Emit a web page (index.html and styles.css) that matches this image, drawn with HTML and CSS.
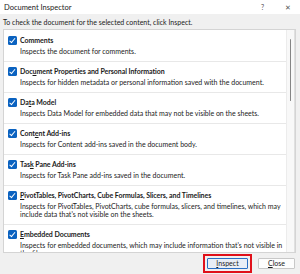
FILE: index.html
```html
<!DOCTYPE html>
<html lang="en">

<head>
    <meta charset="UTF-8">
    <title>Document Inspector</title>
    <link rel="stylesheet" href="styles.css">
</head>

<body>
    <div id="dialog">
        <!-- Title bar -->
        <div id="title-bar">
            <span class="title">Document Inspector</span>
            <span class="title-btn">?</span>
            <span class="title-btn close-x">&#x2715;</span>
        </div>

        <p class="intro">To check the document for the selected content, click Inspect.</p>

        <!-- List of inspectors -->
        <div id="panel">
            <ul id="inspectorList">
                <li>
                    <div class="item-head"><span class="check"></span><strong>Comments</strong></div>
                    <p>Inspects the document for comments.</p>
                </li>
                <li>
                    <div class="item-head"><span class="check"></span><strong>Doc<u>u</u>ment Properties and Personal Information</strong></div>
                    <p>Inspects for hidden metadata or personal information saved with the document.</p>
                </li>
                <li>
                    <div class="item-head"><span class="check"></span><strong>Da<u>t</u>a Model</strong></div>
                    <p>Inspects Data Model for embedded data that may not be visible on the sheets.</p>
                </li>
                <li>
                    <div class="item-head"><span class="check"></span><strong>Cont<u>e</u>nt Add-ins</strong></div>
                    <p>Inspects for Content add-ins saved in the document body.</p>
                </li>
                <li>
                    <div class="item-head"><span class="check"></span><strong>Tas<u>k</u> Pane Add-ins</strong></div>
                    <p>Inspects for Task Pane add-ins saved in the document.</p>
                </li>
                <li>
                    <div class="item-head"><span class="check"></span><strong><u>P</u>ivotTables, PivotCharts, Cube Formulas, Slicers, and Timelines</strong></div>
                    <p>Inspects for PivotTables, PivotCharts, cube formulas, slicers, and timelines, which may include data that's not visible on the sheets.</p>
                </li>
                <li>
                    <div class="item-head"><span class="check"></span><strong><u>E</u>mbedded Documents</strong></div>
                    <p>Inspects for embedded documents, which may include information that's not visible in the file.</p>
                </li>
            </ul>
            <div id="scrollbar"><div class="thumb"></div></div>
        </div>

        <!-- Buttons -->
        <div id="button-row">
            <div class="highlight">
                <button class="btn primary"><u>I</u>nspect</button>
            </div>
            <button class="btn"><u>C</u>lose</button>
        </div>
    </div>
</body>

</html>
```

FILE: styles.css
```css
/* Basic reset */
body,
html {
    margin: 0;
    padding: 0;
    height: 100%;
    overflow: hidden;
    font-family: Lato, "Liberation Sans", sans-serif;
    font-size: 7px;
    color: #1b1b1b;
    background: #f0f0f0;
}

#dialog {
    display: flex;
    flex-direction: column;
    height: 274px;
}

/* Title bar */
#title-bar {
    display: flex;
    align-items: center;
    height: 14px;
    background: #fff;
    padding: 0 0 0 4px;
}

#title-bar .title {
    flex: 1;
    font-size: 7.5px;
}

.title-btn {
    color: #555;
    font-size: 7px;
    width: 25px;
    text-align: center;
}

.intro {
    margin: 0;
    padding: 4px 3px 0;
    height: 11px;
    line-height: 9px;
}

/* White panel with the list */
#panel {
    display: flex;
    margin: 0 4px 0 3px;
    height: 222px;
    background: #fff;
    border: 1px solid #d4d4d4;
    overflow: hidden;
}

#inspectorList {
    flex: 1;
    list-style: none;
    margin: 0;
    padding: 1px 0 0;
}

#inspectorList li {
    padding: 4px 2px 6px 4px;
    border-bottom: 1px solid #e8e8e8;
}

.item-head {
    display: flex;
    align-items: center;
    height: 10px;
    gap: 3px;
}

.item-head strong {
    font-weight: 700;
    letter-spacing: -0.05px;
}

.check {
    position: relative;
    width: 9px;
    height: 9px;
    border-radius: 1.5px;
    background: #0a62c0;
    flex-shrink: 0;
}

.check::after {
    content: "";
    position: absolute;
    left: 3px;
    top: 1px;
    width: 2px;
    height: 4.5px;
    border: solid #fff;
    border-width: 0 1.2px 1.2px 0;
    transform: rotate(40deg);
}

#inspectorList p {
    margin: 2px 0 0 12px;
    line-height: 8px;
}

/* Scrollbar */
#scrollbar {
    width: 7px;
    background: #f8f8f8;
    border-left: 1px solid #ececec;
    border-right: 1px solid #e0e0e0;
    display: flex;
    justify-content: center;
    padding-top: 9px;
}

.thumb {
    width: 1.5px;
    height: 62px;
    background: #858585;
    border-radius: 1px;
}

/* Buttons */
#button-row {
    display: flex;
    justify-content: flex-end;
    align-items: center;
    gap: 6px;
    padding: 0 5px 0 0;
    flex: 1;
}

.highlight {
    border: 2px solid #e0101a;
    padding: 2px;
}

.btn {
    font-family: inherit;
    font-size: 7px;
    color: #1b1b1b;
    height: 11px;
    padding: 0;
    width: 37px;
    background: #fdfdfd;
    border: 1px solid #c8c8c8;
    border-radius: 1px;
    line-height: 9px;
}

.btn.primary {
    width: 41px;
    background: #e8eef6;
    border-color: #2a6fc4;
}
```
